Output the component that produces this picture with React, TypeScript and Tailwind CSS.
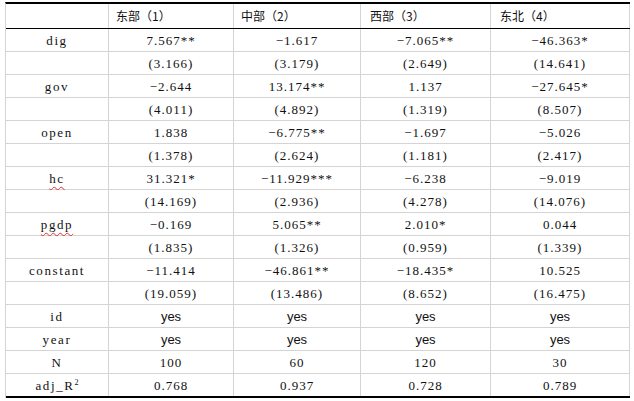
import React from "react";

const rows: string[][] = [
  ["dig", "7.567**", "−1.617", "−7.065**", "−46.363*"],
  ["", "(3.166)", "(3.179)", "(2.649)", "(14.641)"],
  ["gov", "−2.644", "13.174**", "1.137", "−27.645*"],
  ["", "(4.011)", "(4.892)", "(1.319)", "(8.507)"],
  ["open", "1.838", "−6.775**", "−1.697", "−5.026"],
  ["", "(1.378)", "(2.624)", "(1.181)", "(2.417)"],
  ["hc", "31.321*", "−11.929***", "−6.238", "−9.019"],
  ["", "(14.169)", "(2.936)", "(4.278)", "(14.076)"],
  ["pgdp", "−0.169", "5.065**", "2.010*", "0.044"],
  ["", "(1.835)", "(1.326)", "(0.959)", "(1.339)"],
  ["constant", "−11.414", "−46.861**", "−18.435*", "10.525"],
  ["", "(19.059)", "(13.486)", "(8.652)", "(16.475)"],
  ["id", "yes", "yes", "yes", "yes"],
  ["year", "yes", "yes", "yes", "yes"],
  ["N", "100", "60", "120", "30"],
  ["adj_R", "0.768", "0.937", "0.728", "0.789"],
];

const widths = ["w-[103px]", "w-[125px]", "w-[127px]", "w-[130px]", "w-[139px]"];
const headers = ["", "东部（1）", "中部（2）", "西部（3）", "东北（4）"];
const headerPad = ["pl-0", "pl-[7px]", "pl-[7px]", "pl-[9px]", "pl-[9px]"];

const num = "font-['Liberation_Serif',serif] text-[13px] tracking-[1px]";
const label = "font-['Liberation_Serif',serif] text-[13px] tracking-[1.6px]";
const sans = "font-['Liberation_Sans',Arial,sans-serif] text-[13px]";

function Label({ text }: { text: string }) {
  if (text === "hc" || text === "pgdp") {
    return (
      <span className="underline decoration-wavy decoration-[#e03030] decoration-1 underline-offset-[3px]">
        {text}
      </span>
    );
  }
  if (text === "adj_R") {
    return (
      <span>
        adj_R<span className="relative -top-[5px] text-[8px] tracking-normal">2</span>
      </span>
    );
  }
  return <span>{text}</span>;
}

export default function App() {
  return (
    <div className="w-[634px] h-[401px] bg-white pt-[2px] pl-[5px] text-[#111]">
      <div className="w-[625px] border-t-2 border-t-black border-l border-l-[#d4d4d4]">
        <div className="flex h-[25px] border-b border-b-black">
          {headers.map((h, i) => (
            <div
              key={i}
              className={`${widths[i]} ${headerPad[i]} flex items-center border-r border-r-[#d4d4d4] font-['Noto_Sans_CJK_SC',sans-serif] text-[12px] leading-none`}
            >
              {h}
            </div>
          ))}
        </div>
        {rows.map((r, ri) => {
          const last = ri === rows.length - 1;
          return (
            <div
              key={ri}
              className={`flex ${last ? "h-[24px] border-b-2 border-b-black" : "h-[23px] border-b border-b-[#d4d4d4]"}`}
            >
              {r.map((c, ci) => (
                <div
                  key={ci}
                  className={`${widths[ci]} flex items-center justify-center border-r border-r-[#d4d4d4] leading-none ${
                    c === "yes" ? sans : ci === 0 ? label : num
                  }`}
                >
                  {ci === 0 ? <Label text={c} /> : c}
                </div>
              ))}
            </div>
          );
        })}
      </div>
    </div>
  );
}
